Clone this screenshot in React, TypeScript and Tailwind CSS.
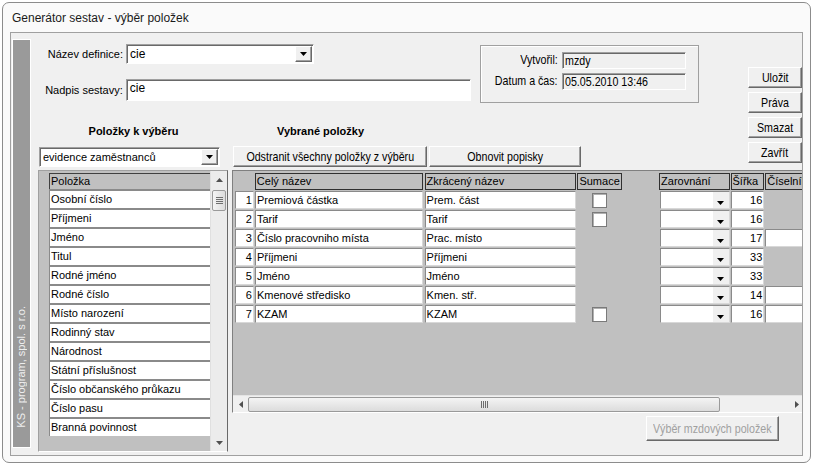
import React from 'react';

const RAISED = 'border border-t-white border-l-white border-r-[#696969] border-b-[#696969] shadow-[inset_-1px_-1px_0_#a0a0a0]';
const SUNKEN = 'border border-t-[#a0a0a0] border-l-[#a0a0a0] border-r-white border-b-white shadow-[inset_1px_1px_0_#696969]';

type Row = { n: number; full: string; short: string; sum: boolean; w: number; num: boolean };

const rows: Row[] = [
  { n: 1, full: 'Premiová částka', short: 'Prem. část', sum: true, w: 16, num: false },
  { n: 2, full: 'Tarif', short: 'Tarif', sum: true, w: 16, num: false },
  { n: 3, full: 'Číslo pracovniho místa', short: 'Prac. místo', sum: false, w: 17, num: true },
  { n: 4, full: 'Příjmeni', short: 'Příjmeni', sum: false, w: 33, num: false },
  { n: 5, full: 'Jméno', short: 'Jméno', sum: false, w: 33, num: false },
  { n: 6, full: 'Kmenové středisko', short: 'Kmen. stř.', sum: false, w: 14, num: true },
  { n: 7, full: 'KZAM', short: 'KZAM', sum: true, w: 16, num: true },
];

const items = [
  'Osobní číslo', 'Příjmeni', 'Jméno', 'Titul', 'Rodné jméno', 'Rodné číslo', 'Místo narození',
  'Rodinný stav', 'Národnost', 'Státní příslušnost', 'Číslo občanského průkazu', 'Číslo pasu', 'Branná povinnost',
];

// the old narrow dialog font: taller glyphs squeezed horizontally
function Narrow({ children, origin = 'center' }: { children: React.ReactNode; origin?: 'left' | 'right' | 'center' }) {
  const o = origin === 'left' ? 'origin-left' : origin === 'right' ? 'origin-right' : 'origin-center';
  return <span className={`inline-block whitespace-nowrap text-[13px] leading-none scale-x-[0.82] ${o}`}>{children}</span>;
}

function Tri({ dir = 'down', color = '#000' }: { dir?: 'down' | 'up' | 'left' | 'right'; color?: string }) {
  if (dir === 'up') return <svg width="7" height="4" viewBox="0 0 7 4"><path d="M3.5 0L7 4H0z" fill={color} /></svg>;
  if (dir === 'left') return <svg width="4" height="7" viewBox="0 0 4 7"><path d="M0 3.5L4 0v7z" fill={color} /></svg>;
  if (dir === 'right') return <svg width="4" height="7" viewBox="0 0 4 7"><path d="M4 3.5L0 0v7z" fill={color} /></svg>;
  return <svg width="7" height="4" viewBox="0 0 7 4"><path d="M0 0h7L3.5 4z" fill={color} /></svg>;
}

function Combo({ value, className, small }: { value: string; className: string; small?: boolean }) {
  return (
    <div className={`${SUNKEN} bg-white flex ${className}`}>
      <span className={`flex-1 pl-[3px] flex items-center leading-none ${small ? 'text-[11px]' : 'text-[12px]'}`}>{value}</span>
      <span className={`${RAISED} bg-[#f0f0f0] w-[17px] my-[1px] mr-[1px] flex items-center justify-center`}>
        <Tri />
      </span>
    </div>
  );
}

function Button({ label, className, disabled }: { label: string; className: string; disabled?: boolean }) {
  return (
    <div
      className={`${RAISED} bg-[#f0f0f0] flex items-center justify-center ${
        disabled ? 'text-[#a0a0a0]' : 'text-black'
      } ${className}`}
    >
      <Narrow>{label}</Narrow>
    </div>
  );
}

function HeadCell({ label, className }: { label: string; className: string }) {
  return (
    <div className={`h-[17px] border border-[#303030] bg-[#c0c0c0] pl-[1px] flex items-center leading-none overflow-hidden whitespace-nowrap ${className}`}>
      {label}
    </div>
  );
}

const CELL = 'h-[18px] bg-white border border-t-[#8a8a8a] border-l-[#8a8a8a] border-r-[#d8d8d8] border-b-[#d8d8d8] flex items-center leading-none whitespace-nowrap overflow-hidden';

export default function App() {
  return (
    <div className="w-[814px] h-[468px] bg-white font-['Liberation_Sans',Arial,sans-serif] text-[11px] text-black overflow-hidden">
      <div className="ml-[2px] mt-[2px] w-[809px] h-[461px] border border-[#8c8c8c] rounded-[7px] bg-[#fafafa] flex flex-col">
        <div className="h-[29px] pl-[9px] flex items-center text-[12px] text-[#1a1a1a]">Generátor sestav - výběr položek</div>

        <div className="mx-[7px] h-[424px] border border-[#a0a0a0] bg-[#f0f0f0] flex overflow-hidden">
          {/* side bar */}
          <div className="ml-[1px] mt-[6px] w-[19px] h-[409px] border border-white bg-[#9a9a9a] flex flex-col justify-end items-center pb-[19px]">
            <span className="[writing-mode:vertical-rl] rotate-180 text-[#eeeeee] text-[11px] leading-none whitespace-nowrap">
              KS - program, spol. s r.o.
            </span>
          </div>

          <div className="w-[771px] flex flex-col overflow-hidden">
            {/* top section */}
            <div className="flex">
              <div className="w-[717px] flex flex-col">
                <div className="h-[70px] flex">
                  <div className="w-[440px] flex flex-col">
                    <div className="mt-[11px] h-[20px] flex items-center">
                      <span className="w-[92px] text-right">Název definice:</span>
                      <Combo value="cie" className="ml-[3px] w-[188px] h-[20px]" />
                    </div>
                    <div className="mt-[15px] h-[22px] flex items-center">
                      <span className="w-[92px] text-right">Nadpis sestavy:</span>
                      <div className={`${SUNKEN} ml-[3px] w-[346px] h-[22px] bg-white pl-[3px] pt-[2px] text-[12px] leading-none`}>cie</div>
                    </div>
                  </div>
                  <div className="ml-[9px] mt-[12px] w-[219px] h-[58px] border border-[#a0a0a0] shadow-[inset_1px_1px_0_#ffffff] pt-[6px] flex flex-col gap-[4px]">
                    <div className="flex items-center h-[17px]">
                      <span className="w-[77px] text-right"><Narrow origin="right">Vytvořil:</Narrow></span>
                      <div className={`${SUNKEN} ml-[4px] w-[124px] h-[17px] bg-[#f0f0f0] pl-[2px] flex items-center`}>
                        <Narrow origin="left">mzdy</Narrow>
                      </div>
                    </div>
                    <div className="flex items-center h-[17px]">
                      <span className="w-[77px] text-right"><Narrow origin="right">Datum a čas:</Narrow></span>
                      <div className={`${SUNKEN} ml-[4px] w-[124px] h-[17px] bg-[#f0f0f0] pl-[2px] flex items-center`}>
                        <Narrow origin="left">05.05.2010 13:46</Narrow>
                      </div>
                    </div>
                  </div>
                </div>

                <div className="mt-[21px] h-[14px] flex items-center font-bold text-[11px]">
                  <span className="ml-[7px] w-[191px] text-center">Položky k výběru</span>
                  <span className="ml-[48px]">Vybrané položky</span>
                </div>

                <div className="mt-[8px] h-[21px] flex items-start">
                  <Combo value="evidence zaměstnanců" small className="ml-[8px] mt-[1px] w-[181px] h-[20px]" />
                  <Button label="Odstranit všechny položky z výběru" className="ml-[13px] w-[194px] h-[21px]" />
                  <Button label="Obnovit popisky" className="ml-[2px] w-[152px] h-[21px]" />
                </div>
              </div>

              <div className="w-[54px] pt-[34px] flex flex-col gap-[4px]">
                <Button label="Uložit" className="h-[21px]" />
                <Button label="Práva" className="h-[21px]" />
                <Button label="Smazat" className="h-[21px]" />
                <Button label="Zavřít" className="h-[21px]" />
              </div>
            </div>

            {/* bottom section */}
            <div className="mt-[3px] flex items-start">
              {/* list of items */}
              <div className="ml-[7px] w-[191px] h-[282px] border border-t-[#a0a0a0] border-l-[#a0a0a0] border-r-[#696969] border-b-white bg-[#c0c0c0] flex">
                <div className="w-[10px]" />
                <div className="w-[161px] flex flex-col pt-[2px]">
                  <div className="h-[16px] bg-[#c0c0c0] border-t border-l border-[#404040] pl-[1px] flex items-center leading-none">Položka</div>
                  {items.map((it) => (
                    <div key={it} className="h-[19px] bg-white border-t-2 border-l border-[#8a8a8a] pl-[1px] flex items-center leading-none whitespace-nowrap">
                      {it}
                    </div>
                  ))}
                </div>
                <div className="w-[17px] bg-[#ececec] border-l border-[#e0e0e0] flex flex-col items-center">
                  <div className="h-[17px] flex items-center justify-center"><Tri dir="up" color="#505050" /></div>
                  <div className="mt-[2px] w-[14px] h-[21px] border border-[#9a9a9a] rounded-[2px] bg-gradient-to-r from-[#f4f4f4] to-[#dcdcdc] flex flex-col items-center justify-center gap-[1px]">
                    <div className="w-[7px] h-px bg-[#6e6e6e]" />
                    <div className="w-[7px] h-px bg-[#6e6e6e]" />
                    <div className="w-[7px] h-px bg-[#6e6e6e]" />
                    <div className="w-[7px] h-px bg-[#6e6e6e]" />
                  </div>
                  <div className="flex-1" />
                  <div className="h-[17px] flex items-center justify-center"><Tri color="#505050" /></div>
                </div>
              </div>

              {/* selected items grid */}
              <div className="ml-[4px] flex flex-col">
                <div className="w-[574px] h-[243px] border border-t-[#808080] border-l-[#808080] border-r-white border-b-white bg-[#c0c0c0] flex flex-col">
                  <div className="mt-[2px] flex">
                    <div className="ml-[2px] w-[19px]" />
                    <HeadCell label="Celý název" className="ml-[1px] w-[169px]" />
                    <HeadCell label="Zkrácený název" className="ml-[2px] w-[153px]" />
                    <HeadCell label="Sumace" className="ml-[1px] w-[45px]" />
                    <HeadCell label="Zarovnání" className="ml-[37px] w-[71px]" />
                    <HeadCell label="Šířka" className="ml-[1px] w-[34px]" />
                    <HeadCell label="Číselník" className="ml-[1px] w-[40px]" />
                  </div>
                  <div className="mt-[1px] flex flex-col gap-[1px]">
                    {rows.map((r) => (
                      <div key={r.n} className="flex h-[18px]">
                        <div className={`${CELL} ml-[2px] w-[19px] justify-end pr-[1px]`}>{r.n}</div>
                        <div className={`${CELL} ml-[1px] w-[169px] pl-[1px]`}>{r.full}</div>
                        <div className={`${CELL} ml-[2px] w-[153px] pl-[1px]`}>{r.short}</div>
                        <div className="ml-[1px] w-[45px] flex items-center justify-center">
                          {r.sum && <div className="w-[15px] h-[15px] border border-[#7a7a7a] bg-white shadow-[inset_1px_1px_0_#b0b0b0]" />}
                        </div>
                        <div className={`${CELL} ml-[38px] w-[70px] justify-end`}>
                          <div className="w-[16px] h-full bg-[#f0f0f0] flex items-end justify-center pb-[3px]"><Tri /></div>
                        </div>
                        <div className={`${CELL} ml-[1px] w-[34px] justify-end pr-[1px]`}>{r.w}</div>
                        {r.num ? <div className={`${CELL} ml-[1px] w-[40px]`} /> : <div className="ml-[1px] w-[40px]" />}
                      </div>
                    ))}
                  </div>
                  <div className="flex-1" />
                  <div className="h-[17px] bg-[#f0f0f0] border-t border-[#e4e4e4] flex items-center">
                    <div className="w-[15px] flex justify-center"><Tri dir="left" color="#505050" /></div>
                    <div className="w-[472px] h-[15px] border border-[#9a9a9a] rounded-[2px] bg-gradient-to-b from-[#f4f4f4] to-[#dcdcdc] flex items-center justify-center gap-[1px]">
                      <div className="w-px h-[7px] bg-[#6e6e6e]" />
                      <div className="w-px h-[7px] bg-[#6e6e6e]" />
                      <div className="w-px h-[7px] bg-[#6e6e6e]" />
                      <div className="w-px h-[7px] bg-[#6e6e6e]" />
                    </div>
                    <div className="flex-1" />
                    <div className="w-[17px] flex justify-center"><Tri dir="right" color="#505050" /></div>
                  </div>
                </div>
                <Button label="Výběr mzdových položek" disabled className="mt-[3px] ml-[414px] w-[133px] h-[25px]" />
              </div>
            </div>
          </div>
        </div>
      </div>
    </div>
  );
}
